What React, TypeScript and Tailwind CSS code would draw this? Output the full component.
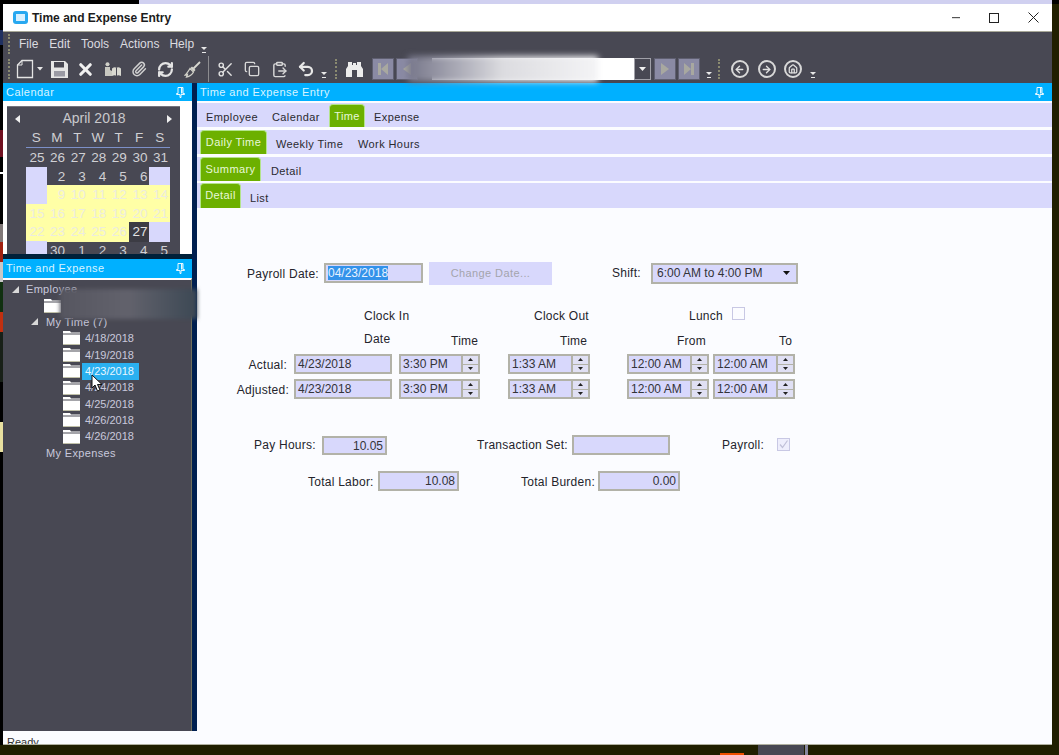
import React from "react";
import { Scissors, Undo2, Paperclip, RefreshCw, Copy, ClipboardPaste, ArrowLeft, ArrowRight, Home, X } from "lucide-react";

const Arrow = ({ ml = "" }: { ml?: string }) => (
  <svg width="6" height="8" viewBox="0 0 6 8" className={`${ml} mt-[10px] shrink-0`}>
    <path d="M0 2h6L3 5z" fill="#e8e8e8" />
    <rect x="1" y="7" width="4" height="1" fill="#e8e8e8" />
  </svg>
);

const Slot = ({ children }: { children: React.ReactNode }) => (
  <div className="w-[26.6px] shrink-0 flex items-center justify-center text-[#dedede]">{children}</div>
);

const Grip = ({ cls = "" }: { cls?: string }) => (
  <div className={`w-[2px] h-[20px] shrink-0 border-l-2 border-dotted border-[#8a8a70] ${cls}`} />
);

const PinIcon = () => (
  <svg width="9" height="11" viewBox="0 0 9 11" className="shrink-0">
    <path d="M2 .5h5v6h1.5v1h-3.5v3h-1v-3H.5v-1H2z" fill="none" stroke="#e8f8ff" strokeWidth="1" />
    <rect x="5" y="1" width="1.4" height="5.5" fill="#e8f8ff" />
  </svg>
);

const Header = ({ title }: { title: string }) => (
  <div className="h-full bg-[#00b0ff] flex items-center justify-between text-[#d8f4ff] text-[11px] tracking-[0.45px]">
    <span>{title}</span>
    <PinIcon />
  </div>
);

const NavBtn = ({ d, ml = "" }: { d: string; ml?: string }) => (
  <div className={`w-[22px] h-[22px] bg-[#8a8aa4] border border-[#5f5f70] shrink-0 flex items-center justify-center ${ml}`}>
    <svg width="14" height="16" viewBox="0 0 14 16"><path d={d} fill="#a8a8a0" /></svg>
  </div>
);

const Circle = ({ children }: { children: React.ReactNode }) => (
  <div className="w-[18px] h-[18px] rounded-full border-2 border-[#d8d8d8] flex items-center justify-center text-[#e0e0e0] shrink-0">{children}</div>
);

const Toolbar = () => (
  <div className="h-[28px] bg-[#484853] flex items-center relative">
    <Grip cls="ml-[5px]" />
    <svg width="18" height="20" viewBox="0 0 18 20" className="ml-[6px] shrink-0">
      <path d="M6 1.5h10.5v17H1.5V6z" fill="none" stroke="#e4e4e4" strokeWidth="1.3" />
      <path d="M6 1.5V6H1.5" fill="none" stroke="#e4e4e4" strokeWidth="1" />
    </svg>
    <svg width="6" height="4" viewBox="0 0 6 4" className="ml-[3px] shrink-0"><path d="M0 0h6L3 3.5z" fill="#e8e8e8" /></svg>
    <div className="w-[3px] shrink-0" />
    <Slot>
      <svg width="17" height="17" viewBox="0 0 17 17">
        <path d="M0 0h14l3 3v14H0z" fill="#e6e6e6" />
        <rect x="3" y="1" width="10" height="5.5" fill="#484853" />
        <rect x="3" y="10" width="11" height="5.5" fill="#9a9aa4" />
      </svg>
    </Slot>
    <Slot><X size={19} strokeWidth={4} color="#f0f0f0" /></Slot>
    <Slot>
      <svg width="17" height="15" viewBox="0 0 17 15">
        <circle cx="3.5" cy="2.2" r="2" fill="#d0d0c8" />
        <path d="M1 5h5v3l2 1v5H1z" fill="#c8c8c0" />
        <path d="M8 6.5c2-1.5 3.5-1.5 4.5-.5 1-1 2.500-1 4.500.5V14c-2-1-3.500-1-4.500 0-1-1-2.500-1-4.500 0z" fill="#d8d8d0" />
        <path d="M12.500 6v8" stroke="#484853" strokeWidth="1" />
      </svg>
    </Slot>
    <Slot><Paperclip size={16} strokeWidth={2.2} color="#d0d0d0" /></Slot>
    <Slot><RefreshCw size={17} strokeWidth={3.2} color="#e4e4e4" /></Slot>
    <Slot>
      <svg width="17" height="17" viewBox="0 0 17 17">
        <path d="M16 1l-6.500 6.500" stroke="#d8d8d0" strokeWidth="1.800" fill="none" />
        <path d="M8 5.500l3.500 3.500-1.500 1.500L6.500 7z" fill="#d8d8d0" />
        <path d="M6 7.500l3.500 3.500C8 14 5.500 15.500 2.500 16 3 15 3.500 14 3.500 13.500 2.800 14 2 14.200 1 14.200 3 12.500 4.500 10 6 7.500z" fill="none" stroke="#d0d0c8" strokeWidth="1.300" />
      </svg>
    </Slot>
    <div className="w-[1px] h-[26px] bg-[#8c8c90] ml-[2px] mr-[4px] shrink-0" />
    <Slot><Scissors size={17} strokeWidth={2} color="#e0e0e0" /></Slot>
    <Slot><Copy size={16} strokeWidth={2} color="#d8d8d8" /></Slot>
    <Slot><ClipboardPaste size={17} strokeWidth={2} color="#d8d8d8" /></Slot>
    <Slot><Undo2 size={18} strokeWidth={3} color="#e8e8e8" /></Slot>
    <Arrow ml="ml-[2px]" />
    <Grip cls="ml-[8px]" />
    <svg width="17" height="16" viewBox="0 0 17 16" className="ml-[9px] shrink-0">
      <path d="M2 1h4v3h1v-2h3v2h1V1h4v4l2 3v8h-6V9H6v7H0V8l2-3z" fill="#ececec" />
    </svg>
    <NavBtn ml="ml-[9px]" d="M2 2h3v12H2zM12 2v12L5 8z" />
    <NavBtn ml="ml-[2px]" d="M11 2v12L3 8z" />
    <div className="w-[202px] h-[22px] shrink-0 bg-white ml-[14px]" />
    <div className="w-[17px] h-[22px] bg-[#484853] border border-[#a0a0a8] flex items-center justify-center shrink-0">
      <svg width="7" height="4" viewBox="0 0 7 4"><path d="M0 0h7L3.5 4z" fill="#f0f0f0" /></svg>
    </div>
    <NavBtn ml="ml-[3px]" d="M3 2v12l8-6z" />
    <NavBtn ml="ml-[2px]" d="M2 2v12l7-6zM9 2h3v12H9z" />
    <Arrow ml="ml-[6px]" />
    <Grip cls="ml-[6px]" />
    <div className="ml-[11px]"><Circle><ArrowLeft size={11} strokeWidth={3} /></Circle></div>
    <div className="ml-[8.6px]"><Circle><ArrowRight size={11} strokeWidth={3} /></Circle></div>
    <div className="ml-[8.6px]"><Circle><Home size={10} strokeWidth={3} /></Circle></div>
    <Arrow ml="ml-[8px]" />
  </div>
);

type Cell = { t: string; k?: "d" | "y" | "l" | "s" };
const rows: Cell[][] = [
  ["25", "26", "27", "28", "29", "30", "31"].map((t) => ({ t })),
  [{ t: "", k: "l" }, { t: "2" }, { t: "3" }, { t: "4" }, { t: "5" }, { t: "6" }, { t: "", k: "l" }],
  [{ t: "", k: "l" }, ...["9", "10", "11", "12", "13", "14"].map((t) => ({ t, k: "y" as const }))],
  ["15", "16", "17", "18", "19", "20", "21"].map((t) => ({ t, k: "y" as const })),
  [...["22", "23", "24", "25", "26"].map((t) => ({ t, k: "y" as const })), { t: "27", k: "s" }, { t: "", k: "l" }],
  [{ t: "", k: "l" }, ...["30", "1", "2", "3", "4", "5"].map((t) => ({ t }))],
];

const Calendar = () => (
  <div className="h-[153px] bg-white pl-[4px] pt-[5px] overflow-hidden">
    <div className="w-[173px] h-[160px] bg-[#484853] border-t border-[#74747c]">
      <div className="h-[23px] flex items-center justify-between pl-[8px] pr-[8px] text-[#c8c8cc]">
        <svg width="5" height="8" viewBox="0 0 5 8"><path d="M5 0v8L0 4z" fill="#f0f0f0" /></svg>
        <span className="text-[14px] ml-[1px]">April 2018</span>
        <svg width="5" height="8" viewBox="0 0 5 8"><path d="M0 0v8l5-4z" fill="#f0f0f0" /></svg>
      </div>
      <div className="w-[144px] ml-[19px]">
        <div className="grid grid-cols-7 h-[18px] items-start leading-[16px] border-b border-[#7c90c8] text-[13.5px] text-[#d0d0d4] text-center">
          {["S", "M", "T", "W", "T", "F", "S"].map((d, i) => <span key={i}>{d}</span>)}
        </div>
        {rows.map((r, i) => (
          <div key={i} className="grid grid-cols-7 h-[18.5px] text-[13.5px] leading-[20px] text-right">
            {r.map((c, j) => (
              <div
                key={j}
                className={
                  c.k === "y"
                    ? "bg-[#ffffa6] text-[#ecece0] pr-[2px]"
                    : c.k === "l"
                    ? "bg-[#d8d8fc]"
                    : c.k === "s"
                    ? "bg-[#3c3c44] text-[#e4e4e4] pr-[2px]"
                    : "text-[#d0d0d4] pr-[2px]"
                }
              >
                {c.t}
              </div>
            ))}
          </div>
        ))}
      </div>
    </div>
  </div>
);

const Folder = () => (
  <svg width="17" height="14" viewBox="0 0 17 14" className="shrink-0">
    <path d="M0 0h7l1 1.5h9v1H0z" fill="#ffffff" />
    <rect x="0" y="3.5" width="17" height="10.5" fill="#ffffff" />
    <rect x="0" y="13" width="17" height="1" fill="#c0c0a8" />
  </svg>
);
const Tri = () => (
  <svg width="7" height="7" viewBox="0 0 7 7" className="shrink-0"><path d="M7 0v7H0z" fill="#d8d8d8" /></svg>
);

const dates = ["4/18/2018", "4/19/2018", "4/23/2018", "4/24/2018", "4/25/2018", "4/26/2018", "4/26/2018"];

const Tree = () => (
  <div className="flex-1 bg-[#484853] border-t-2 border-[#fbfcff] pt-[1px] text-[11px] text-[#c8c8dc] overflow-hidden border-r border-r-[#70705c]">
    <div className="h-[16.4px] flex items-center pl-[9px]"><Tri /><span className="ml-[7px] tracking-[0.3px]">Employee</span></div>
    <div className="h-[16.4px] flex items-center pl-[41px]"><Folder /></div>
    <div className="h-[16.4px] flex items-center pl-[28px]"><Tri /><span className="ml-[8px] tracking-[0.3px]">My Time (7)</span></div>
    {dates.map((d, i) => (
      <div key={i} className="h-[16.4px] flex items-center pl-[60px]">
        <Folder />
        {i === 2 ? (
          <span className="ml-[2px] w-[57px] h-[17px] pl-[3px] bg-[#2ab0f0] text-[#e8f6ff] leading-[17px]">{d}</span>
        ) : (
          <span className="ml-[5px]">{d}</span>
        )}
      </div>
    ))}
    <div className="h-[16.4px] flex items-center pl-[43px] tracking-[0.35px]">My Expenses</div>
  </div>
);

const Tab = ({ w, h, label }: { w: string; h: string; label: string }) => (
  <div className={`${w} ${h} shrink-0 bg-[#6cb000] border border-b-0 border-[#b4e48c] rounded-t-[4px] text-[#e8f8d8] text-center pt-[3px]`}>{label}</div>
);

const TabRow = ({ h, mt, children }: { h: string; mt: string; children: React.ReactNode }) => (
  <div className={`${h} ${mt} bg-[#d8d8fc] flex items-end text-[11px] tracking-[0.4px] text-[#2a2a30]`}>{children}</div>
);

const inputCls = "bg-[#d8d8fc] border-2 border-[#b2b2a8] text-[12px] tracking-normal text-[#333338] leading-[16px] shrink-0 overflow-hidden";

const Spin = ({ t, w, ml }: { t: string; w: string; ml: string }) => (
  <div className={`${w} ${ml} h-[20px] shrink-0 flex bg-[#b2b2a8] p-[2px]`}>
    <div className="flex-1 bg-[#d8d8fc] text-[12px] tracking-normal text-[#333338] leading-[17px] pl-[2px]">{t}</div>
    <div className="w-[15px] ml-[2px] flex flex-col gap-[1px] bg-[#b2b2a8]">
      <div className="flex-1 bg-[#e0e0f4] flex items-center justify-center">
        <svg width="5" height="3" viewBox="0 0 5 3"><path d="M0 3h5L2.5 0z" fill="#222" /></svg>
      </div>
      <div className="flex-1 bg-[#e0e0f4] flex items-center justify-center">
        <svg width="5" height="3" viewBox="0 0 5 3"><path d="M0 0h5L2.5 3z" fill="#222" /></svg>
      </div>
    </div>
  </div>
);

const TimeRow = ({ label, mt, w, ml }: { label: string; mt: string; w: string; ml: string }) => (
  <div className={`flex items-center h-[20px] ${mt}`}>
    <div className={`${w} text-right shrink-0 pt-[2px]`}>{label}</div>
    <div className={`${inputCls} w-[98px] h-[20px] ${ml} pl-[2px]`}>4/23/2018</div>
    <Spin t="3:30 PM" w="w-[81px]" ml="ml-[7px]" />
    <Spin t="1:33 AM" w="w-[82px]" ml="ml-[28px]" />
    <Spin t="12:00 AM" w="w-[82px]" ml="ml-[37px]" />
    <Spin t="12:00 AM" w="w-[82px]" ml="ml-[4px]" />
  </div>
);

const Form = () => (
  <div className="flex-1 text-[12px] tracking-[0.25px] text-[#24242c]">
    <div className="flex items-center h-[24px] mt-[53px] pl-[50px]">
      <div className="w-[77px] shrink-0 pt-[1px]">Payroll Date:</div>
      <div className={`${inputCls} w-[99px] h-[20px] pl-[2px]`}>
        <span className="bg-[#3392ea] text-[#e8f2ff]">04/23/2018</span>
      </div>
      <div className="w-[123px] h-[23px] ml-[6px] bg-[#d8d8fc] text-[#a4a4ac] text-[11px] tracking-[0.4px] text-center leading-[23px] shrink-0">Change Date...</div>
      <div className="w-[39px] ml-[60px] shrink-0">Shift:</div>
      <div className={`${inputCls} w-[147px] h-[21px] pl-[4px] flex items-center justify-between pr-[6px]`}>
        <span>6:00 AM to 4:00 PM</span>
        <svg width="7" height="4" viewBox="0 0 7 4"><path d="M0 0h7L3.5 4z" fill="#111" /></svg>
      </div>
    </div>
    <div className="flex items-center h-[16px] mt-[23px] pl-[167px]">
      <div className="w-[170px] shrink-0">Clock In</div>
      <div className="w-[155px] shrink-0">Clock Out</div>
      <div className="w-[43px] shrink-0">Lunch</div>
      <div className="w-[13px] h-[13px] bg-[#fbfcff] border border-[#c8c8e4] -mt-[5px]" />
    </div>
    <div className="flex items-start h-[16px] mt-[6px] pl-[167px]">
      <div className="w-[87px] shrink-0">Date</div>
      <div className="w-[109px] shrink-0 pt-[2px]">Time</div>
      <div className="w-[117px] shrink-0 pt-[2px]">Time</div>
      <div className="w-[102px] shrink-0 pt-[2px]">From</div>
      <div className="pt-[2px]">To</div>
    </div>
    <TimeRow label="Actual:" mt="mt-[8px]" w="w-[90px]" ml="ml-[7px]" />
    <TimeRow label="Adjusted:" mt="mt-[5px]" w="w-[92px]" ml="ml-[5px]" />
    <div className="flex items-center h-[20px] mt-[36px] pl-[57px]">
      <div className="w-[68px] shrink-0">Pay Hours:</div>
      <div className={`${inputCls} w-[65px] h-[19px] text-right pr-[2px] text-[11px] font-medium`}>10.05</div>
      <div className="w-[95px] ml-[90px] shrink-0">Transaction Set:</div>
      <div className={`${inputCls} w-[98px] h-[20px]`} />
      <div className="w-[55px] ml-[52px] shrink-0">Payroll:</div>
      <div className="w-[13px] h-[13px] bg-[#eeeefc] border border-[#c8c8e4] flex items-center justify-center -mt-[2px]">
        <svg width="11" height="11" viewBox="0 0 11 11"><path d="M2 5.5l2.5 3L9.5 1.5" fill="none" stroke="#c0c0d8" strokeWidth="1.2" /></svg>
      </div>
    </div>
    <div className="flex items-center h-[20px] mt-[16px] pl-[111px]">
      <div className="w-[70px] shrink-0 pt-[1px]">Total Labor:</div>
      <div className={`${inputCls} w-[81px] h-[20px] text-right pr-[2px] text-[11px] font-medium`}>10.08</div>
      <div className="w-[77px] ml-[62px] shrink-0 pt-[1px]">Total Burden:</div>
      <div className={`${inputCls} w-[82px] h-[20px] text-right pr-[2px] text-[11px] font-medium`}>0.00</div>
    </div>
  </div>
);

const leftStrip: [string, string][] = [
  ["h-[26px]", "bg-black"], ["h-[15px]", "bg-[#203060]"], ["h-[85px]", "bg-black"],
  ["h-[27px]", "bg-[#701020]"], ["h-[15px]", "bg-black"], ["h-[2px]", "bg-white"],
  ["h-[50px]", "bg-black"], ["h-[18px]", "bg-[#807878]"], ["h-[20px]", "bg-[#a02010]"],
  ["h-[20px]", "bg-[#c8c8c8]"], ["h-[30px]", "bg-[#103010]"], ["h-[20px]", "bg-[#c03010]"],
  ["h-[50px]", "bg-[#182018]"], ["h-[40px]", "bg-black"], ["h-[30px]", "bg-[#e8e0a0]"],
  ["h-[293px]", "bg-black"],
];

export default function App() {
  return (
    <div className="w-[1059px] h-[755px] bg-[#201f00] overflow-hidden relative font-['Liberation_Sans',Arial,sans-serif]">
      <div className="h-[4px] flex">
        <div className="w-[139px] bg-black" />
        <div className="w-[913px] bg-[#d0d0f0]" />
        <div className="flex-1 bg-black" />
      </div>
      <div className="flex h-[741px]">
        <div className="w-[3px] flex flex-col overflow-hidden">
          {leftStrip.map(([h, c], i) => <div key={i} className={`${h} ${c} shrink-0`} />)}
        </div>
        <div className="w-[1049px] flex flex-col bg-[#fbfcff]">
          <div className="h-[28px] bg-white border-b border-[#a8a898] flex items-center pl-[10px]">
            <svg width="15" height="13" viewBox="0 0 15 13" className="shrink-0">
              <rect x="0" y="0" width="15" height="13" rx="3" fill="#28a8f0" />
              <rect x="3" y="3" width="9" height="7" fill="#d8f0ff" />
            </svg>
            <span className="ml-[4px] text-[12px] font-bold text-[#1c1c20]">Time and Expense Entry</span>
            <div className="ml-auto flex items-center">
              <svg width="8" height="2" viewBox="0 0 8 2"><rect width="8" height="1.2" fill="#555" /></svg>
              <svg width="10" height="10" viewBox="0 0 10 10" className="ml-[29px]"><rect x=".5" y=".5" width="9" height="9" fill="none" stroke="#222" /></svg>
              <svg width="11" height="11" viewBox="0 0 11 11" className="ml-[29px] mr-[13px]"><path d="M.5.5l10 10M10.5.5l-10 10" stroke="#222" fill="none" /></svg>
            </div>
          </div>
          <div className="h-[23px] bg-[#484853] flex items-center text-[12px] text-[#dcdce0]">
            <Grip cls="ml-[5px]" />
            <span className="ml-[9px]">File</span>
            <span className="ml-[11px]">Edit</span>
            <span className="ml-[11px]">Tools</span>
            <span className="ml-[11px]">Actions</span>
            <span className="ml-[10px]">Help</span>
            <Arrow ml="ml-[7px]" />
          </div>
          <Toolbar />
          <div className="h-[648px] flex">
            <div className="w-[189px] flex flex-col">
              <div className="h-[18px] pl-[3px] pr-[7px] bg-[#00b0ff]"><Header title="Calendar" /></div>
              <Calendar />
              <div className="h-[5px] bg-[#00213a]" />
              <div className="h-[19px] pl-[3px] pr-[7px] bg-[#00b0ff]"><Header title="Time and Expense" /></div>
              <Tree />
            </div>
            <div className="w-[5px] bg-[#002050]" />
            <div className="flex-1 flex flex-col">
              <div className="h-[18px] pl-[3px] pr-[8px] bg-[#00b0ff]"><Header title="Time and Expense Entry" /></div>
              <TabRow h="h-[24px]" mt="mt-[2px]">
                <span className="ml-[9px] w-[66px] pb-[2px] shrink-0">Employee</span>
                <span className="w-[57px] pb-[2px] shrink-0">Calendar</span>
                <Tab w="w-[36px]" h="h-[23px]" label="Time" />
                <span className="ml-[9px] pb-[2px]">Expense</span>
              </TabRow>
              <TabRow h="h-[24px]" mt="mt-[3px]">
                <div className="ml-[3px]"><Tab w="w-[67px]" h="h-[24px]" label="Daily Time" /></div>
                <span className="ml-[9px] w-[82px] pb-[2px] shrink-0">Weekly Time</span>
                <span className="pb-[2px]">Work Hours</span>
              </TabRow>
              <TabRow h="h-[24px]" mt="mt-[3px]">
                <div className="ml-[3px]"><Tab w="w-[61px]" h="h-[24px]" label="Summary" /></div>
                <span className="ml-[10px] pb-[2px]">Detail</span>
              </TabRow>
              <TabRow h="h-[25px]" mt="mt-[2px]">
                <div className="ml-[3px]"><Tab w="w-[41px]" h="h-[25px]" label="Detail" /></div>
                <span className="ml-[9px] pb-[2px]">List</span>
              </TabRow>
              <Form />
            </div>
          </div>
          <div className="h-[14px] border-b border-[#b0b0a0] overflow-hidden text-[11px] text-[#333] pl-[4px] pt-[4px] leading-[14px]">Ready</div>
        </div>
        <div className="flex-1 bg-[#201f00]" />
      </div>
      <div className="h-[10px] flex">
        <div className="ml-[720px] w-[24px] h-[2px] mt-[8px] bg-[#f05000]" />
        <div className="ml-[14px] w-[46px] bg-[#484853]" />
        <div className="ml-[1px] w-[3px] bg-[#8888a0]" />
      </div>

      {/* redaction blurs lying over the app */}
      <div className="absolute left-[408px] top-[56px] w-[190px] h-[26px] blur-[3px] bg-gradient-to-r from-[#77778a] via-[#dcdce0] to-[#f4f4f6]" />
      <div className="absolute left-[60px] top-[289px] w-[137px] h-[30px] blur-[2px] bg-gradient-to-r from-[#565660] via-[#62626c] to-[#3c4854]" />
      {/* mouse pointer */}
      <svg width="13" height="18" viewBox="0 0 13 18" className="absolute left-[91px] top-[374px]">
        <path d="M1 1v13l3-3 2.5 6 2.5-1-2.5-5.5H11z" fill="#fff" stroke="#111" strokeWidth="1" />
      </svg>
    </div>
  );
}
